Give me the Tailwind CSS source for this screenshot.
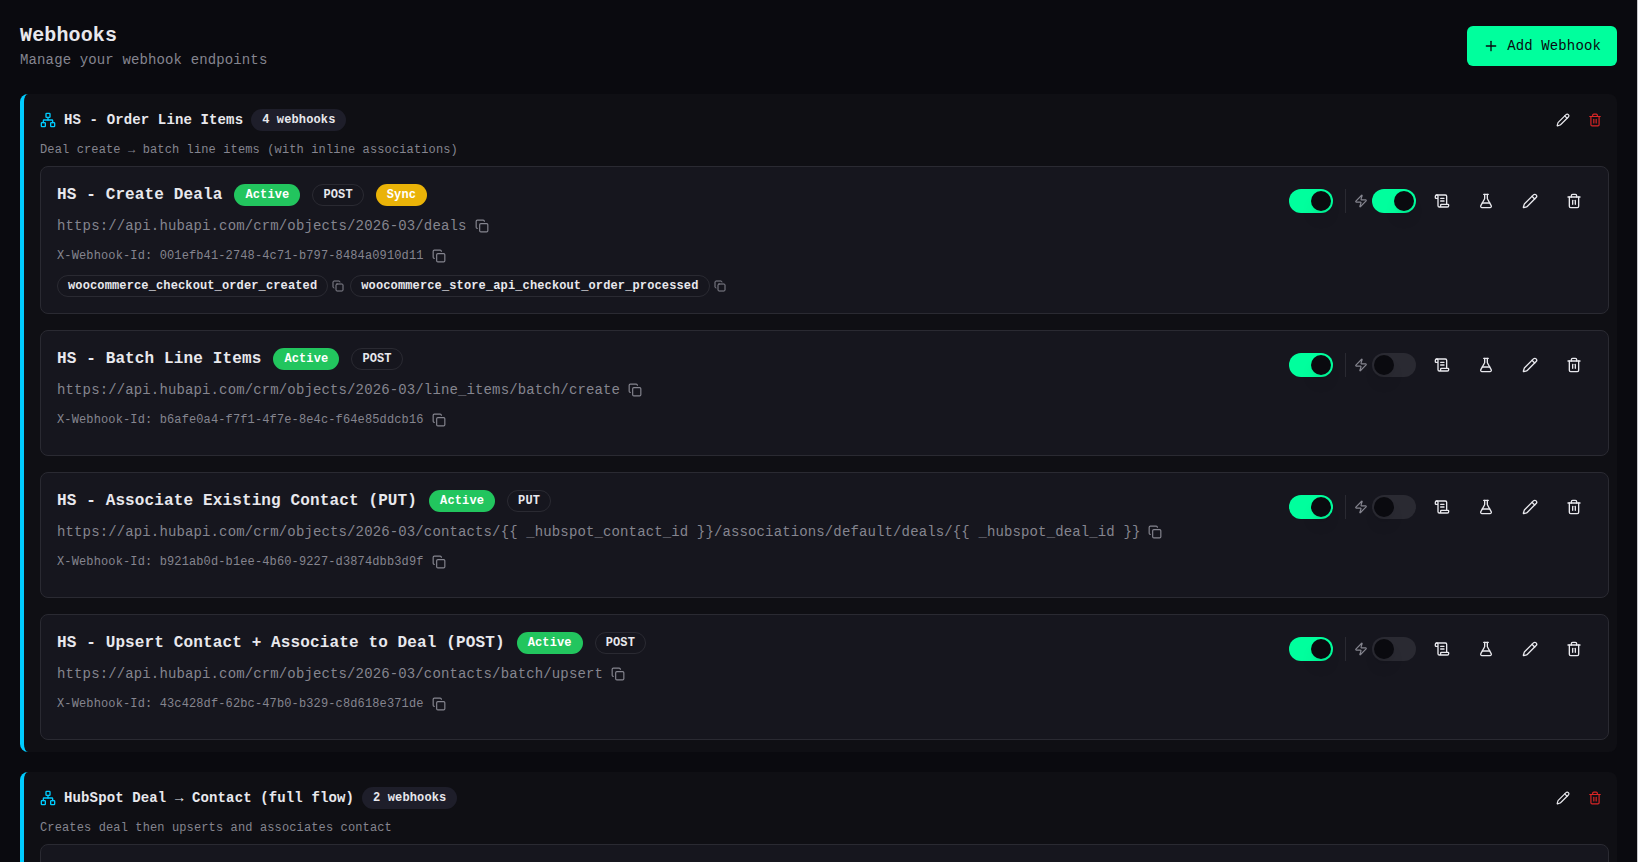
<!DOCTYPE html>
<html lang="en">
<head>
    <meta charset="UTF-8">
    <meta name="viewport" content="width=device-width, initial-scale=1.0">
    <title>Webhooks</title>
    <script src="https://cdn.jsdelivr.net/npm/@tailwindcss/browser@4"></script>
    <style>
        body { font-family: 'Liberation Mono', monospace; letter-spacing: 0.13px; }
    </style>
</head>
<body class="bg-[#0a0a0f] text-[#e8e8ed] h-screen overflow-hidden border-r border-[#c8c8cc]">

    <!-- Icons -->
    <svg class="hidden" xmlns="http://www.w3.org/2000/svg">
        <symbol id="i-plus" viewBox="0 0 24 24"><path d="M5 12h14"/><path d="M12 5v14"/></symbol>
        <symbol id="i-network" viewBox="0 0 24 24"><rect x="16" y="16" width="6" height="6" rx="1"/><rect x="2" y="16" width="6" height="6" rx="1"/><rect x="9" y="2" width="6" height="6" rx="1"/><path d="M5 16v-3a1 1 0 0 1 1-1h12a1 1 0 0 1 1 1v3"/><path d="M12 12V8"/></symbol>
        <symbol id="i-copy" viewBox="0 0 24 24"><rect x="8" y="8" width="14" height="14" rx="2"/><path d="M4 16c-1.1 0-2-.9-2-2V4c0-1.1.9-2 2-2h10c1.1 0 2 .9 2 2"/></symbol>
        <symbol id="i-zap" viewBox="0 0 24 24"><path d="M4 14a1 1 0 0 1-.78-1.63l9.9-10.2a.5.5 0 0 1 .86.46l-1.92 6.02A1 1 0 0 0 13 10h7a1 1 0 0 1 .78 1.63l-9.9 10.2a.5.5 0 0 1-.86-.46l1.92-6.02A1 1 0 0 0 11 14z"/></symbol>
        <symbol id="i-scroll" viewBox="0 0 24 24"><path d="M15 12h-5"/><path d="M15 8h-5"/><path d="M19 17V5a2 2 0 0 0-2-2H4"/><path d="M8 21h12a2 2 0 0 0 2-2v-1a1 1 0 0 0-1-1H11a1 1 0 0 0-1 1v1a2 2 0 1 1-4 0V5a2 2 0 1 0-4 0v2a1 1 0 0 0 1 1h3"/></symbol>
        <symbol id="i-flask" viewBox="0 0 24 24"><path d="M14 2v6a2 2 0 0 0 .245.96l5.51 10.08A2 2 0 0 1 18 22H6a2 2 0 0 1-1.755-2.96l5.51-10.08A2 2 0 0 0 10 8V2"/><path d="M6.453 15h11.094"/><path d="M8.5 2h7"/></symbol>
        <symbol id="i-pencil" viewBox="0 0 24 24"><path d="M21.174 6.812a1 1 0 0 0-3.986-3.987L3.842 16.174a2 2 0 0 0-.5.83l-1.321 4.352a.5.5 0 0 0 .623.622l4.353-1.32a2 2 0 0 0 .83-.497z"/><path d="m15 5 4 4"/></symbol>
        <symbol id="i-trash" viewBox="0 0 24 24"><path d="M3 6h18"/><path d="M19 6v14c0 1-1 2-2 2H7c-1 0-2-1-2-2V6"/><path d="M8 6V4c0-1 1-2 2-2h4c1 0 2 1 2 2v2"/><path d="M10 11v6"/><path d="M14 11v6"/></symbol>
    </svg>

    <main class="px-5 pt-[22px]">
        <div class="flex items-center justify-between mb-6">
            <div>
                <h1 class="text-xl font-bold">Webhooks</h1>
                <p class="text-sm text-[#85858f]">Manage your webhook endpoints</p>
            </div>
            <button class="flex items-center gap-2 h-10 px-4 rounded-md bg-[#00ff9d] text-[#0a0a0f] text-sm font-medium">
                <svg class="size-4 fill-none stroke-current stroke-2" stroke-linecap="round" stroke-linejoin="round"><use href="#i-plus"/></svg>
                Add Webhook
            </button>
        </div>
        <div id="groups" class="space-y-5"></div>
    </main>

    <script>
        const groups = [
            {
                name: 'HS - Order Line Items',
                count: '4 webhooks',
                description: 'Deal create → batch line items (with inline associations)',
                webhooks: [
                    { name: 'HS - Create Deala', method: 'POST', sync: true, instant: true, url: 'https://api.hubapi.com/crm/objects/2026-03/deals', id: '001efb41-2748-4c71-b797-8484a0910d11', events: ['woocommerce_checkout_order_created', 'woocommerce_store_api_checkout_order_processed'] },
                    { name: 'HS - Batch Line Items', method: 'POST', url: 'https://api.hubapi.com/crm/objects/2026-03/line_items/batch/create', id: 'b6afe0a4-f7f1-4f7e-8e4c-f64e85ddcb16', events: [] },
                    { name: 'HS - Associate Existing Contact (PUT)', method: 'PUT', url: 'https://api.hubapi.com/crm/objects/2026-03/contacts/{{ _hubspot_contact_id }}/associations/default/deals/{{ _hubspot_deal_id }}', id: 'b921ab0d-b1ee-4b60-9227-d3874dbb3d9f', events: [] },
                    { name: 'HS - Upsert Contact + Associate to Deal (POST)', method: 'POST', url: 'https://api.hubapi.com/crm/objects/2026-03/contacts/batch/upsert', id: '43c428df-62bc-47b0-b329-c8d618e371de', events: [] }
                ]
            },
            {
                name: 'HubSpot Deal → Contact (full flow)',
                count: '2 webhooks',
                description: 'Creates deal then upserts and associates contact',
                webhooks: [null]
            }
        ];

        const icon = (name, size) => `<svg class="${size} shrink-0 fill-none stroke-current stroke-2" stroke-linecap="round" stroke-linejoin="round"><use href="#i-${name}"/></svg>`;

        const badge = (text, color) => `<span class="inline-flex items-center h-[22px] px-2.5 rounded-full border text-xs font-bold whitespace-nowrap ${color}">${text}</span>`;

        const toggle = (on) => `
            <button class="flex items-center h-6 w-11 rounded-full border-2 border-transparent ${on ? 'bg-[#00ff9d]' : 'bg-[#2a2a32]'}">
                <span class="block size-5 rounded-full bg-[#0a0a0f] shadow-lg ${on ? 'translate-x-5' : ''}"></span>
            </button>`;

        const action = (name) => `<button class="flex items-center justify-center size-9 rounded-md">${icon(name, 'size-4')}</button>`;

        const copyButton = () => `<button class="p-1 text-[#85858f]">${icon('copy', 'size-3.5')}</button>`;

        function webhookCard(w) {
            // Not loaded yet
            if (!w) return '<div class="h-[126px] rounded-lg border border-[#2a2a32] bg-[#16161e]"></div>';

            return `
                <div class="flex items-start justify-between p-4 rounded-lg border border-[#2a2a32] bg-[#16161e]">
                    <div class="space-y-2">
                        <div class="flex items-center gap-3 h-6">
                            <h3 class="text-base font-bold">${w.name}</h3>
                            ${badge('Active', 'border-transparent bg-[#22c55e] text-white')}
                            ${badge(w.method, 'border-[#2a2a32]')}
                            ${w.sync ? badge('Sync', 'border-transparent bg-[#eab308] text-white') : ''}
                        </div>
                        <div class="flex items-center gap-1 h-[22px] text-sm text-[#85858f]">
                            <span>${w.url}</span>${copyButton()}
                        </div>
                        <div class="flex items-center gap-1 h-[22px] text-xs text-[#85858f]">
                            <span>X-Webhook-Id: ${w.id}</span>${copyButton()}
                        </div>
                        <div class="flex items-center gap-1.5">
                            ${w.events.map(e => `<div class="flex items-center gap-1">${badge(e, 'border-[#2a2a32]')}<button class="text-[#85858f]">${icon('copy', 'size-3')}</button></div>`).join('')}
                        </div>
                    </div>
                    <div class="flex items-center gap-2">
                        ${toggle(true)}
                        <div class="flex items-center gap-1 ml-1 pl-2 border-l border-[#2a2a32] text-[#85858f]">
                            ${icon('zap', 'size-3.5')}
                            ${toggle(w.instant)}
                        </div>
                        ${action('scroll')}
                        ${action('flask')}
                        ${action('pencil')}
                        ${action('trash')}
                    </div>
                </div>`;
        }

        document.getElementById('groups').innerHTML = groups.map(g => `
            <section class="rounded-lg border-l-4 border-[#00ccff] bg-[#0f0f14] pl-4 pr-2 py-3">
                <div class="flex items-center justify-between h-7">
                    <div class="flex items-center gap-2">
                        <span class="text-[#00ccff]">${icon('network', 'size-4')}</span>
                        <h2 class="text-sm font-bold">${g.name}</h2>
                        ${badge(g.count, 'border-transparent bg-[#1e1e2a]')}
                    </div>
                    <div class="flex items-center gap-1">
                        <button class="flex items-center justify-center size-7">${icon('pencil', 'size-3.5')}</button>
                        <button class="flex items-center justify-center size-7 text-[#dc2626]">${icon('trash', 'size-3.5')}</button>
                    </div>
                </div>
                <p class="my-2 text-xs text-[#85858f]">${g.description}</p>
                <div class="space-y-4">${g.webhooks.map(webhookCard).join('')}</div>
            </section>`).join('');
    </script>
</body>
</html>
